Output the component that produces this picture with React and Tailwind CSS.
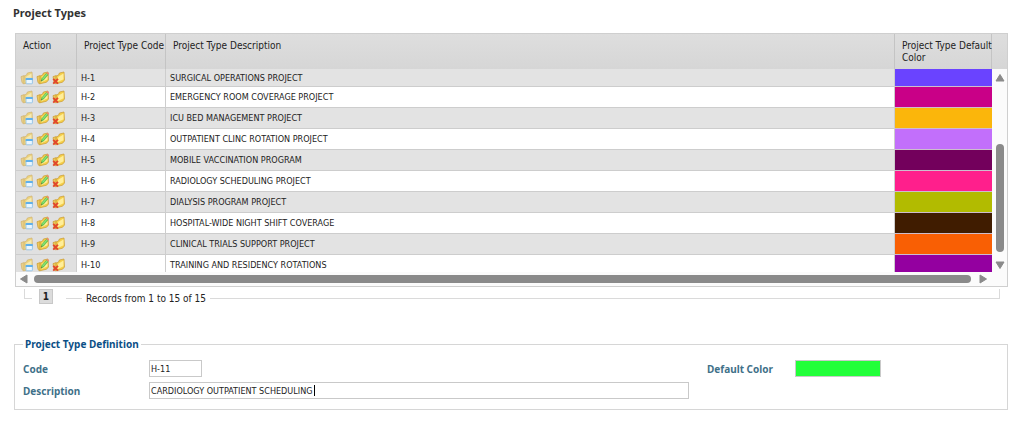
import React from "react";

const rows = [
  ["H-1", "SURGICAL OPERATIONS PROJECT", "bg-[#6a43ff]"],
  ["H-2", "EMERGENCY ROOM COVERAGE PROJECT", "bg-[#c90087]"],
  ["H-3", "ICU BED MANAGEMENT PROJECT", "bg-[#fbb60b]"],
  ["H-4", "OUTPATIENT CLINC ROTATION PROJECT", "bg-[#c26ffb]"],
  ["H-5", "MOBILE VACCINATION PROGRAM", "bg-[#73005c]"],
  ["H-6", "RADIOLOGY SCHEDULING PROJECT", "bg-[#ff1f8c]"],
  ["H-7", "DIALYSIS PROGRAM PROJECT", "bg-[#b2bb00]"],
  ["H-8", "HOSPITAL-WIDE NIGHT SHIFT COVERAGE", "bg-[#401c00]"],
  ["H-9", "CLINICAL TRIALS SUPPORT PROJECT", "bg-[#f95f04]"],
  ["H-10", "TRAINING AND RESIDENCY ROTATIONS", "bg-[#9400a0]"],
];

function Folder({ faded }) {
  return (
    <g opacity={faded ? 0.65 : 1} strokeLinejoin="round">
      <path d="M1 5.6 L4.2 4.6 L4.6 11.4 L3.4 12.8 L2 11.6 Z" fill="#edc95a" stroke="#c99a34" strokeWidth="0.7" />
      <path d="M4.2 5 L6.6 4 L7.4 2 L12 1 L12.5 9 L10.6 11.2 L3.8 12.8 Z" fill="#f5cf4a" stroke="#c99a34" strokeWidth="0.7" />
      <path d="M6.2 5.8 L11.5 2.6 L11.5 8.2 L5.4 11.2 Z" fill="#ffee9a" />
    </g>
  );
}

function ViewIcon() {
  return (
    <svg viewBox="0 0 14 14" className="size-3.5" aria-hidden="true">
      <Folder faded />
      <rect x="6" y="7.4" width="6.4" height="5.4" rx="0.6" fill="#eaf6fe" stroke="#86bde6" strokeWidth="0.8" />
      <rect x="5.7" y="7" width="7" height="2" fill="#5fb0ec" />
    </svg>
  );
}

function EditIcon() {
  return (
    <svg viewBox="0 0 14 14" className="size-3.5" aria-hidden="true">
      <Folder />
      <path d="M5 10.2 L5.8 7.6 L10.4 2.2 L12.2 3.7 L7.4 9.2 Z" fill="#62cf55" stroke="#47a840" strokeWidth="0.4" />
      <path d="M6.6 8.2 L11 3.1" stroke="#b4f09c" strokeWidth="0.7" />
      <path d="M10.4 2.2 L11.4 1 L13.2 2.5 L12.2 3.7 Z" fill="#ee8a72" />
      <path d="M5 10.2 L5.4 8.8 L6.3 9.7 Z" fill="#7a6a3c" />
    </svg>
  );
}

function DeleteIcon() {
  return (
    <svg viewBox="0 0 14 14" className="size-3.5" aria-hidden="true">
      <Folder />
      <path d="M1.2 7.8 L6 12.6 M6 7.8 L1.2 12.6" stroke="#e2452c" strokeWidth="1.9" />
    </svg>
  );
}

const actions = [
  ["View", ViewIcon],
  ["Edit", EditIcon],
  ["Delete", DeleteIcon],
];

function Arrow({ d, label }) {
  return (
    <button type="button" aria-label={label} className="shrink-0">
      <svg viewBox="0 0 10 10" className="size-2.5" aria-hidden="true">
        <path d={d} fill="#8a8a8a" stroke="#8a8a8a" strokeWidth="1" strokeLinejoin="round" />
      </svg>
    </button>
  );
}

const th = "border-r border-[#c4c4c4] pt-1.5 pl-[7px] text-left align-top font-normal whitespace-nowrap";

function Grid() {
  return (
    <div className="border border-[#cfcfcf]">
      <div className="flex">
        <div className="h-[238px] min-w-0 flex-1 overflow-hidden">
          <table className="w-full table-fixed border-separate border-spacing-0">
            <colgroup>
              <col className="w-[61px]" />
              <col className="w-[89px]" />
              <col />
              <col className="w-[97px]" />
            </colgroup>
            <thead>
              <tr className="h-[35px] bg-linear-to-b from-[#dedede] to-[#d6d6d6] text-[10px] leading-3">
                <th className={th}>Action</th>
                <th className={th}>Project Type Code</th>
                <th className={th}>Project Type Description</th>
                <th className={th}>
                  Project Type Default
                  <br />
                  Color
                </th>
              </tr>
            </thead>
            <tbody>
              {rows.map(([code, text, color], i) => (
                <tr
                  key={code}
                  className={`${i === 0 ? "h-[18px]" : "h-[21px]"} text-[9px] leading-3 ${i % 2 ? "bg-white" : "bg-[#e3e3e3]"}`}
                >
                  <td className="border-r border-b border-[#cdcdcd] bg-[#e0e0e0] p-0 pl-1">
                    <div className="flex gap-0.5">
                      {actions.map(([label, Icon]) => (
                        <button key={label} type="button" aria-label={`${label} ${code}`}>
                          <Icon />
                        </button>
                      ))}
                    </div>
                  </td>
                  <td className="border-r border-b border-[#cdcdcd] p-0 pl-1">{code}</td>
                  <td className="border-r border-b border-[#cdcdcd] p-0 pl-1">{text}</td>
                  <td className={`border-b border-[#cdbdcd] p-0 ${color}`} />
                </tr>
              ))}
            </tbody>
          </table>
        </div>
        <div className="flex w-[15px] flex-col bg-[#fbfbfb]">
          <div className="h-[35px] bg-linear-to-b from-[#dedede] to-[#d6d6d6]" />
          <div className="flex flex-1 flex-col items-center pt-1">
            <Arrow label="Scroll up" d="M5 1.5 L9 8 H1 Z" />
            <div className="mt-[61px] w-2 flex-1 rounded-full bg-[#8a8a8a]" />
            <div className="mt-2 mb-0.5 flex">
              <Arrow label="Scroll down" d="M5 8.5 L9 2 H1 Z" />
            </div>
          </div>
        </div>
      </div>
      <div className="flex h-3.5 items-center bg-[#fbfbfb] pr-[19px] pl-[3px]">
        <Arrow label="Scroll left" d="M1.5 5 L8 1 V9 Z" />
        <div className="mr-[7px] ml-[5px] h-2 flex-1 rounded-full bg-[#8a8a8a]" />
        <Arrow label="Scroll right" d="M8.5 5 L2 1 V9 Z" />
      </div>
    </div>
  );
}

function Pager() {
  return (
    <nav aria-label="Pages" className="mr-2 ml-[9px] flex pt-0.5 text-[10px] leading-4">
      <div className="h-2.5 w-2 border-b border-l border-[#dadada]" />
      <button type="button" className="ml-[7px] h-[15px] w-3.5 border border-[#c8c8c8] bg-[#dcdcdc] leading-3 font-bold">
        1
      </button>
      <div className="ml-[13px] h-2.5 w-4 border-b border-[#dadada]" />
      <p className="mx-1 pt-0.5">Records from 1 to 15 of 15</p>
      <div className="h-2.5 flex-1 border-r border-b border-[#dadada]" />
    </nav>
  );
}

const label = "font-['Noto_Sans',sans-serif] text-[10px] leading-3 font-bold text-[#3f7189]";
const field = "h-[17px] border border-[#c9c9c9] bg-white px-px text-[9px] outline-none";

function Definition() {
  return (
    <fieldset className="mt-[31px] -ml-px border border-[#d6d6d6] px-2 pb-2.5">
      <legend className="px-0.5 font-['Noto_Sans',sans-serif] text-[10px] leading-3 font-bold text-[#0b4f86]">Project Type Definition</legend>
      <div className="grid grid-cols-[126px_minmax(0,540px)_86px_86px] items-center gap-y-[5px] pt-2.5">
        <label htmlFor="code" className={label}>Code</label>
        <input id="code" defaultValue="H-11" className={`${field} w-[53px]`} />
        <label htmlFor="color" className={`${label} ml-[18px] w-20 whitespace-nowrap`}>Default Color</label>
        <input
          id="color"
          type="color"
          defaultValue="#22ff3a"
          className="ml-5 h-[17px] w-[86px] appearance-none border border-[#c9c9c9] p-0 [&::-webkit-color-swatch]:rounded-none [&::-webkit-color-swatch]:border-0 [&::-webkit-color-swatch-wrapper]:p-0"
        />
        <label htmlFor="description" className={label}>Description</label>
        <div className="relative flex">
          <input id="description" defaultValue="CARDIOLOGY OUTPATIENT SCHEDULING" className={`${field} w-full`} />
          <span className="absolute top-[3px] left-[165px] h-[11px] w-px bg-black" />
        </div>
      </div>
    </fieldset>
  );
}

export default function App() {
  return (
    <main className="min-h-screen bg-white pt-[5px] pr-4 pl-[15px] font-['DejaVu_Sans_Condensed','DejaVu_Sans',sans-serif] text-[#222]">
      <h1 className="-ml-0.5 pb-[13px] font-['Noto_Sans',sans-serif] text-[11px] leading-[15px] font-bold text-[#333]">Project Types</h1>
      <Grid />
      <Pager />
      <Definition />
    </main>
  );
}
